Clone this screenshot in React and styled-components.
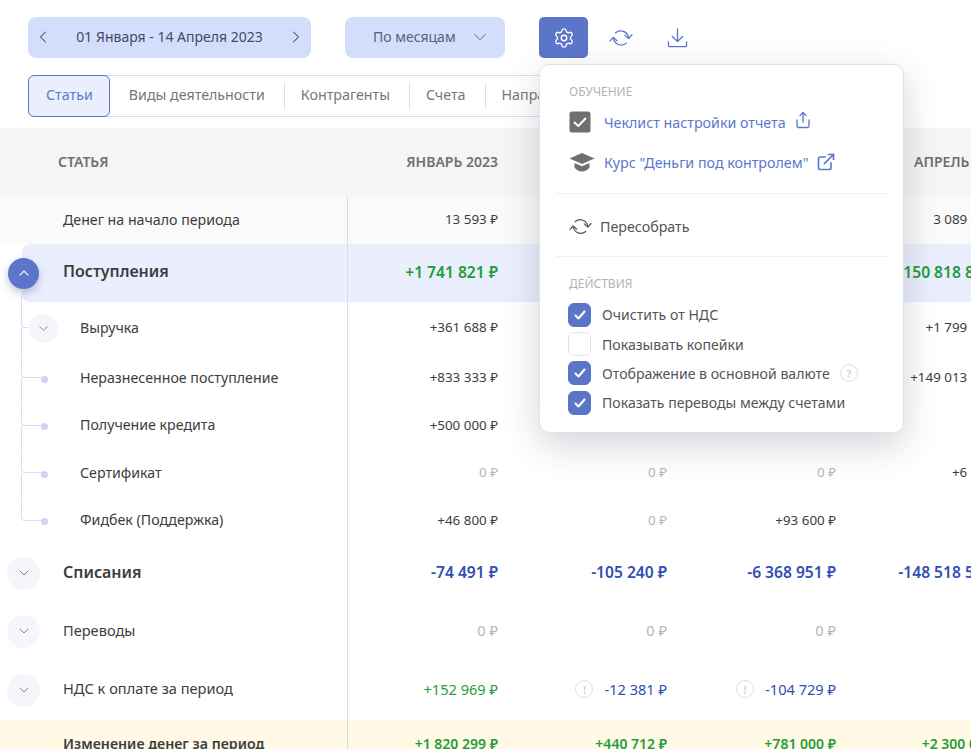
import styled, { createGlobalStyle } from "styled-components";
import { ChevronDown, ChevronLeft, ChevronRight, ChevronUp, ExternalLink, Settings, Share } from "lucide-react";

const GlobalStyle = createGlobalStyle`
  html, body {
    margin: 0;
    height: 100%;
    overflow: hidden;
    background: #fff;
  }
  body {
    font-family: "Noto Sans", "Open Sans", sans-serif;
    font-size: 14.25px;
    color: #3d3d3d;
  }
`;

const Page = styled.div`
  height: 749px;
  overflow: hidden;
  position: relative;
`;

const Toolbar = styled.div`
  display: flex;
  align-items: center;
  padding: 17px 28px 0;
  position: relative;
`;

const DateRange = styled.div`
  width: 283px;
  height: 41px;
  display: flex;
  align-items: center;
  justify-content: space-between;
  padding: 0 5px 2px 5px;
  box-sizing: border-box;
  background: #d3defc;
  border-radius: 8px;
  color: #454b63;
  font-size: 14px;
`;

const Period = styled.div`
  width: 160px;
  height: 41px;
  margin-left: 34px;
  padding: 0 0 2px 28px;
  box-sizing: border-box;
  display: flex;
  align-items: center;
  gap: 13px;
  background: #d3defc;
  border-radius: 8px;
  color: #5a6078;
  font-size: 14px;
`;

const IconButton = styled.button`
  width: 49px;
  height: 41px;
  padding: 0;
  margin-left: ${({ $first }) => ($first ? "34px" : "8px")};
  display: flex;
  align-items: center;
  justify-content: center;
  border: 0;
  border-radius: 5px;
  color: ${({ $active }) => ($active ? "#fff" : "#5a78cf")};
  background: ${({ $active }) => ($active ? "#5b75c9" : "transparent")};
`;

const Tabs = styled.div`
  display: flex;
  width: max-content;
  height: 42px;
  margin: 17px 0 11px 28px;
  box-sizing: border-box;
  border: 1px solid #d5dcf3;
  border-left: 0;
  border-radius: 6px;
`;

const Tab = styled.div`
  position: relative;
  display: flex;
  align-items: center;
  padding: ${({ $active }) => ($active ? "0 16px 4px 17px" : "0 19px 4px 17px")};
  margin: ${({ $active }) => ($active ? "-1px 0" : "0")};
  color: ${({ $active }) => ($active ? "#5b78cf" : "#777")};
  background: ${({ $active }) => ($active ? "#ebeffd" : "transparent")};
  border: ${({ $active }) => ($active ? "1px solid #5b75c9" : "0")};
  border-radius: ${({ $active }) => ($active ? "6px" : "0")};

  &:nth-child(2) {
    padding-left: 19px;
  }

  & + &:not(:nth-child(2))::before {
    content: "";
    position: absolute;
    left: 0;
    top: 7px;
    bottom: 7px;
    width: 1px;
    background: #d5dcf3;
  }
`;

const Row = styled.div`
  display: flex;
  align-items: center;
  height: ${({ $h }) => $h}px;
  margin-left: ${({ $accent }) => ($accent ? "22px" : "0")};
  border-radius: ${({ $accent }) => ($accent ? "8px 0 0 8px" : "0")};
  background: ${({ $bg }) => $bg || "transparent"};
`;

const Label = styled.div`
  position: relative;
  align-self: stretch;
  flex: 0 0 auto;
  width: ${({ $accent }) => ($accent ? "326px" : "348px")};
  box-sizing: border-box;
  display: flex;
  align-items: center;
  padding-left: ${({ $pad }) => $pad}px;
  border-right: ${({ $noLine }) => ($noLine ? "0" : "1px solid #dcdce8")};
  font-weight: ${({ $bold }) => ($bold ? 600 : 400)};
  font-size: ${({ $size }) => $size || 14.2}px;
`;

const LabelText = styled.span`
  margin-bottom: ${({ $lift }) => $lift}px;
`;

const HeadLabel = styled(Label)`
  font-size: 14px;
  font-weight: 600;
  color: #707070;
  text-transform: uppercase;
`;

const Value = styled.div`
  flex: 0 0 auto;
  width: 169px;
  box-sizing: border-box;
  padding: 0 19px 2px 0;
  display: flex;
  align-items: center;
  justify-content: flex-end;
  gap: 11px;
  white-space: nowrap;
  font-size: ${({ $size }) => $size || 13.4}px;
  font-weight: ${({ $bold }) => ($bold ? 600 : 400)};
  color: ${({ $tone }) =>
    ({
      green: "#1f9d3a",
      blue: "#2f4fb5",
      zero: "#b5b5b5",
      head: "#707070",
    })[$tone] || "#3d3d3d"};
`;

const Toggle = styled.span`
  flex: none;
  width: ${({ $size }) => $size}px;
  height: ${({ $size }) => $size}px;
  margin-right: ${({ $gap }) => $gap}px;
  margin-left: ${({ $shift }) => $shift || 0}px;
  display: flex;
  align-items: center;
  justify-content: center;
  position: relative;
  z-index: 1;
  border-radius: 50%;
  color: ${({ $open }) => ($open ? "#e2e8fc" : "#6a7086")};
  background: ${({ $open }) => ($open ? "#5b75c9" : "#f5f6fb")};
  box-shadow: ${({ $open }) => ($open ? "0 4px 10px rgba(60, 70, 120, 0.3)" : "none")};

  &::after {
    content: "";
    display: ${({ $open }) => ($open ? "block" : "none")};
    position: absolute;
    top: 100%;
    left: 13px;
    width: 1px;
    height: 14px;
    background: #d5dcf3;
  }
`;

const Branch = styled.span`
  position: absolute;
  left: 21px;
  top: 0;
  height: 50%;
  width: ${({ $w }) => $w}px;
  box-sizing: border-box;
  border-left: 1px solid #d5dcf3;
  border-bottom: 1px solid #d5dcf3;
  border-bottom-left-radius: 4px;

  &::before {
    content: "";
    display: ${({ $last }) => ($last ? "none" : "block")};
    position: absolute;
    left: -1px;
    top: 100%;
    width: 1px;
    height: 100%;
    margin-top: 1px;
    background: #d5dcf3;
  }
`;

const Dot = styled.span`
  flex: none;
  width: 7px;
  height: 7px;
  margin-right: 32px;
  border-radius: 50%;
  background: #ccd6f3;
  position: relative;
  top: 1px;
`;

const Hint = styled.span`
  flex: none;
  width: 18px;
  height: 18px;
  box-sizing: border-box;
  display: inline-flex;
  align-items: center;
  justify-content: center;
  border: 1px solid #e0e0e0;
  border-radius: 50%;
  font-size: 11px;
  font-weight: 600;
  color: #cfcfcf;
`;

const Menu = styled.div`
  position: absolute;
  left: 539px;
  top: 64px;
  width: 365px;
  height: 369px;
  box-sizing: border-box;
  padding: 0 16px;
  background: #fff;
  border: 1px solid #dfe3f2;
  border-radius: 10px;
  box-shadow: 0 12px 36px rgba(40, 40, 60, 0.2);
  z-index: 5;
`;

const MenuTitle = styled.div`
  padding: 19px 0 0 13px;
  font-size: 12px;
  line-height: 16px;
  color: #b3b3b3;
`;

const LinkList = styled.div`
  padding: 2px 0 11px;
  border-bottom: 1px solid #f0f0f4;
`;

const LinkRow = styled.div`
  display: flex;
  align-items: center;
  height: 40px;
  padding-left: 13px;
  color: #5b78cf;
`;

const LinkIcon = styled.span`
  flex: none;
  width: 35px;
  display: flex;
  align-items: center;
`;

const ShareIcon = styled(Share)`
  margin: -5px 0 0 8px;
`;

const OpenIcon = styled(ExternalLink)`
  margin-left: 8px;
`;

const Rebuild = styled.div`
  display: flex;
  align-items: center;
  gap: 8px;
  height: 63px;
  box-sizing: border-box;
  padding: 3px 0 0 13px;
  border-bottom: 1px solid #f0f0f4;
  color: #555;
`;

const CheckList = styled.div`
  display: flex;
  flex-direction: column;
  padding: 8px 0 0 12px;
`;

const CheckRow = styled.div`
  display: flex;
  align-items: center;
  gap: 11px;
  height: 29.4px;
  color: #555;
  font-size: 14.1px;

  ${Hint} {
    margin-left: -1px;
  }
`;

const Box = styled.span`
  flex: none;
  width: 23px;
  height: 24px;
  box-sizing: border-box;
  display: flex;
  align-items: center;
  justify-content: center;
  border-radius: 6px;
  border: 1px solid ${({ $on }) => ($on ? "#5b75c9" : "#e4e4e4")};
  background: ${({ $on }) => ($on ? "#5b75c9" : "#fff")};
`;

const Check = ({ size = 14 }) => (
  <svg width={size} height={size} viewBox="0 0 14 14" fill="none" stroke="#fff" strokeWidth="2" strokeLinecap="round" strokeLinejoin="round">
    <path d="M2.5 7.5 5.5 10.5 11.5 3.5" />
  </svg>
);

const RefreshIcon = ({ color = "#5a78cf", size = 24 }) => (
  <svg width={size} height={size * 0.83} viewBox="0 0 24 20" fill="none" stroke={color} strokeWidth="1.3" strokeLinecap="round" strokeLinejoin="round">
    <path d="M6.5 4.8A8 8 0 0 1 19.6 9.8" />
    <path d="M16 7.2 19.7 10.6 23 6.8" />
    <path d="M17.5 15.2A8 8 0 0 1 4.4 10.2" />
    <path d="M1 13 4.3 9.4 8 12.8" />
  </svg>
);

const DownloadIcon = () => (
  <svg width="21" height="21" viewBox="0 0 22 22" fill="none" stroke="#5a78cf" strokeWidth="1.4" strokeLinecap="round" strokeLinejoin="round">
    <path d="M11 2V15" />
    <path d="M5.5 10 11 15.2 16.5 10" />
    <path d="M1.5 15.5V19.5a1 1 0 0 0 1 1H19.5a1 1 0 0 0 1-1V15.5" />
  </svg>
);

const GreyCheck = () => (
  <svg width="22" height="22" viewBox="0 0 22 22">
    <rect x="0.5" y="0.5" width="21" height="21" rx="2.5" fill="#6f6f6f" />
    <path d="M5.5 11.5 9.3 15 16.5 7.5" fill="none" stroke="#fff" strokeWidth="2" strokeLinecap="round" strokeLinejoin="round" />
  </svg>
);

const CapIcon = () => (
  <svg width="26" height="20" viewBox="0 0 26 20" fill="#6f6f6f">
    <path d="M13 1 25.5 6.5 13 12 .5 6.5Z" />
    <path d="M5.5 11 13 14.3 20.5 11V15.5C18.5 18 16 19.5 13 19.5S7.5 18 5.5 15.5Z" />
  </svg>
);

const BIG = 15.6;
const TOP = 14.6;
const rows = [
  { h: 48, label: "Денег на начало периода", pad: 63, bg: "#fafafa", cells: [{ t: "13 593 ₽" }, null, null, { t: "3 089 000 ₽" }] },
  {
    h: 58, label: "Поступления", accent: true, bold: true, size: 16, vsize: BIG, lift: 4, bg: "#ebeffd", toggle: "open",
    cells: [{ t: "+1 741 821 ₽", tone: "green", bold: true }, null, null, { t: "+150 818 800 ₽", tone: "green", bold: true }],
  },
  { h: 52, label: "Выручка", pad: 29, branch: 9, toggle: "child", cells: [{ t: "+361 688 ₽" }, null, null, { t: "+1 799 000 ₽" }] },
  { h: 48, label: "Неразнесенное поступление", pad: 41, branch: 21, dot: true, cells: [{ t: "+833 333 ₽" }, null, null, { t: "+149 013 000 ₽" }] },
  { h: 47, label: "Получение кредита", pad: 41, branch: 21, dot: true, cells: [{ t: "+500 000 ₽" }, null, null, { t: "0 ₽", tone: "zero" }] },
  { h: 48, label: "Сертификат", pad: 41, branch: 21, dot: true, cells: [{ t: "0 ₽", tone: "zero" }, { t: "0 ₽", tone: "zero" }, { t: "0 ₽", tone: "zero" }, { t: "+6 000 ₽" }] },
  { h: 47, label: "Фидбек (Поддержка)", pad: 41, branch: 21, dot: true, last: true, cells: [{ t: "+46 800 ₽" }, { t: "0 ₽", tone: "zero" }, { t: "+93 600 ₽" }, { t: "0 ₽", tone: "zero" }] },
  {
    h: 58, label: "Списания", pad: 7, bold: true, size: 16, vsize: BIG, toggle: "top",
    cells: [{ t: "-74 491 ₽", tone: "blue", bold: true }, { t: "-105 240 ₽", tone: "blue", bold: true }, { t: "-6 368 951 ₽", tone: "blue", bold: true }, { t: "-148 518 500 ₽", tone: "blue", bold: true }],
  },
  { h: 58, label: "Переводы", pad: 7, size: TOP, vsize: TOP, toggle: "top", cells: [{ t: "0 ₽", tone: "zero" }, { t: "0 ₽", tone: "zero" }, { t: "0 ₽", tone: "zero" }, { t: "0 ₽", tone: "zero" }] },
  {
    h: 60, label: "НДС к оплате за период", pad: 7, size: TOP, vsize: TOP, lift: 4, toggle: "top",
    cells: [{ t: "+152 969 ₽", tone: "green" }, { t: "-12 381 ₽", tone: "blue", warn: true }, { t: "-104 729 ₽", tone: "blue", warn: true }, { t: "0 ₽", tone: "zero" }],
  },
  {
    h: 48, label: "Изменение денег за период", pad: 63, bold: true, vsize: 14, bg: "#fff9e6",
    cells: [{ t: "+1 820 299 ₽", tone: "green", bold: true }, { t: "+440 712 ₽", tone: "green", bold: true }, { t: "+781 000 ₽", tone: "green", bold: true }, { t: "+2 300 000 ₽", tone: "green", bold: true }],
  },
];

function RowToggle({ kind }) {
  if (kind === "open") {
    return (
      <Toggle $open $size={31} $gap={24} $shift={-14}>
        <ChevronUp size={16} strokeWidth={2} />
      </Toggle>
    );
  }
  if (kind === "child") {
    return (
      <Toggle $size={29} $gap={22}>
        <ChevronDown size={15} strokeWidth={1.25} />
      </Toggle>
    );
  }
  return (
    <Toggle $size={33} $gap={23}>
      <ChevronDown size={16} strokeWidth={1.25} />
    </Toggle>
  );
}

export default function App() {
  return (
    <Page>
      <GlobalStyle />
      <Toolbar>
        <DateRange>
          <ChevronLeft size={20} strokeWidth={1.25} />
          <span>01 Января - 14 Апреля 2023</span>
          <ChevronRight size={20} strokeWidth={1.25} />
        </DateRange>
        <Period>
          <span>По месяцам</span>
          <ChevronDown size={22} strokeWidth={1} />
        </Period>
        <IconButton $first $active>
          <Settings size={22} strokeWidth={1.5} />
        </IconButton>
        <IconButton>
          <RefreshIcon />
        </IconButton>
        <IconButton>
          <DownloadIcon />
        </IconButton>
      </Toolbar>

      <Tabs>
        <Tab $active>Статьи</Tab>
        <Tab>Виды деятельности</Tab>
        <Tab>Контрагенты</Tab>
        <Tab>Счета</Tab>
        <Tab>Направления</Tab>
      </Tabs>

      <Row $h={68} $bg="#f5f5f5">
        <HeadLabel $pad={58} $noLine><LabelText $lift={2}>Статья</LabelText></HeadLabel>
        <Value $tone="head" $bold $size={14}>ЯНВАРЬ 2023</Value>
        <Value />
        <Value />
        <Value $tone="head" $bold $size={14}>АПРЕЛЬ 2023</Value>
      </Row>

      {rows.map((row) => (
        <Row key={row.label} $h={row.h} $bg={row.bg} $accent={row.accent}>
          <Label $pad={row.pad || 0} $accent={row.accent} $bold={row.bold} $size={row.size}>
            {row.branch && <Branch $w={row.branch} $last={row.last} />}
            {row.toggle && <RowToggle kind={row.toggle} />}
            {row.dot && <Dot />}
            <LabelText $lift={row.lift || 2}>{row.label}</LabelText>
          </Label>
          {row.cells.map((cell, i) => (
            <Value key={i} $tone={cell?.tone} $bold={cell?.bold} $size={row.vsize}>
              {cell?.warn && <Hint>!</Hint>}
              {cell?.t}
            </Value>
          ))}
        </Row>
      ))}

      <Menu>
        <MenuTitle>ОБУЧЕНИЕ</MenuTitle>
        <LinkList>
          <LinkRow>
            <LinkIcon><GreyCheck /></LinkIcon>
            Чеклист настройки отчета
            <ShareIcon size={18} strokeWidth={1.75} />
          </LinkRow>
          <LinkRow>
            <LinkIcon><CapIcon /></LinkIcon>
            Курс "Деньги под контролем"
            <OpenIcon size={20} strokeWidth={2} />
          </LinkRow>
        </LinkList>
        <Rebuild>
          <RefreshIcon color="#555" size={23} />
          Пересобрать
        </Rebuild>
        <MenuTitle>ДЕЙСТВИЯ</MenuTitle>
        <CheckList>
          <CheckRow><Box $on><Check /></Box>Очистить от НДС</CheckRow>
          <CheckRow><Box />Показывать копейки</CheckRow>
          <CheckRow><Box $on><Check /></Box>Отображение в основной валюте<Hint>?</Hint></CheckRow>
          <CheckRow><Box $on><Check /></Box>Показать переводы между счетами</CheckRow>
        </CheckList>
      </Menu>
    </Page>
  );
}
